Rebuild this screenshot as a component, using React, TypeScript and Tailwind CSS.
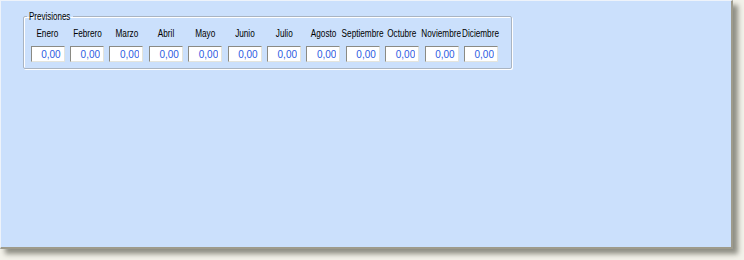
const meses = [
  "Enero",
  "Febrero",
  "Marzo",
  "Abril",
  "Mayo",
  "Junio",
  "Julio",
  "Agosto",
  "Septiembre",
  "Octubre",
  "Noviembre",
  "Diciembre",
];

export default function App() {
  return (
    <div className="w-[744px] h-[260px] bg-[#f3f2ea] overflow-hidden font-['Liberation_Sans',Arial,sans-serif]">
      <div className="w-[733px] h-[249px] bg-[#cbe0fc] border-t border-l border-t-[#eef3fa] border-l-[#eef3fa] border-r-2 border-b-2 border-r-[#9e9b8c] border-b-[#9e9b8c] shadow-[5px_5px_5px_rgba(60,60,50,0.55)] pt-[9px] pl-[22px]">
        <fieldset className="w-[489px] h-[59px] border border-[#a9b4c2] rounded-[2px] shadow-[inset_1px_1px_0_#ffffff,1px_1px_0_#ffffff] px-[4px]">
          <legend className="-ml-[1px] px-[2px] w-[46px] text-[10px] leading-[13px] text-black whitespace-nowrap">
            <span className="inline-block origin-left scale-x-[0.8]">Previsiones</span>
          </legend>
          <div className="grid grid-cols-[repeat(12,39.4px)] mt-[4px]">
            {meses.map((m) => (
              <div key={m} className="flex flex-col items-center">
                <span className="text-[10px] leading-[13px] text-black whitespace-nowrap scale-x-[0.82]">{m}</span>
                <input
                  readOnly
                  value="0,00"
                  className="mt-[6px] w-[34px] h-[16px] bg-white border border-t-[#8a8a84] border-l-[#8a8a84] border-r-[#e4e4dc] border-b-[#e4e4dc] text-right pr-[3px] text-[10px] leading-[14px] text-[#2b5ce2] outline-none"
                />
              </div>
            ))}
          </div>
        </fieldset>
      </div>
    </div>
  );
}
